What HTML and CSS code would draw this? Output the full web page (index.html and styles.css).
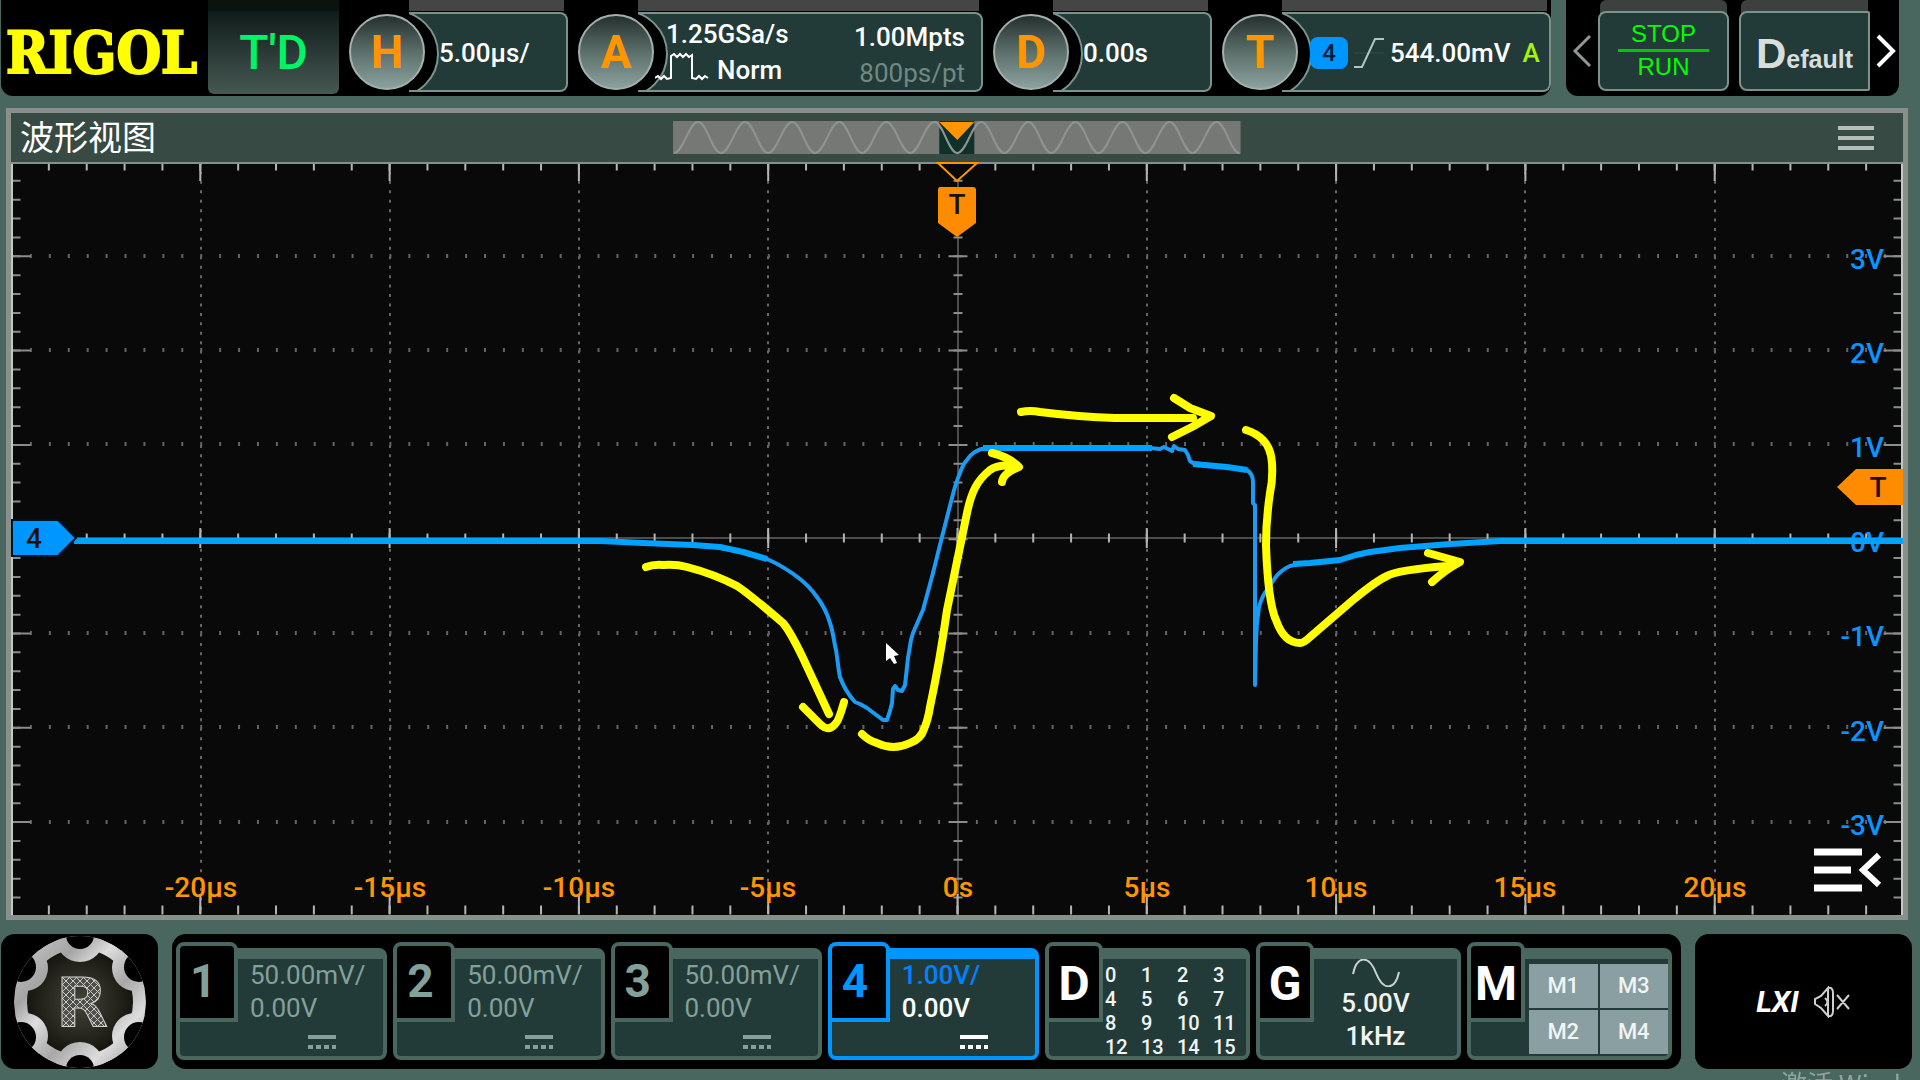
FILE: index.html
```html
<!DOCTYPE html>
<html lang="zh">
  <head>
    <meta charset="utf-8">
    <title>RIGOL</title>
    <link rel="stylesheet" href="styles.css">
  </head>
  <body>
    <header class="topbar">
      <div class="group settings">
        <div class="logo">RIGOL</div>
        <div class="status">T'D</div>
        <button class="module short">
          <span class="knob">H</span>
          <span class="box">5.00µs/</span>
        </button>
        <button class="module acquire">
          <span class="knob">A</span>
          <span class="box">
            <span class="col">
              <span class="rate">1.25GSa/s</span>
              <span class="mode">
                <svg width="54" height="30" viewBox="0 0 54 30"><path d="M0 26l3-2 3 3 3-3 3 3 4-1V4l3-2 3 3 3-3 3 3 3-3 3 3 3-2V26l4 1 3-3 3 3 3-3 3 2" fill="none" stroke="#fff" stroke-width="2"/></svg>
                Norm
              </span>
            </span>
            <span class="col right">
              <span>1.00Mpts</span>
              <span class="dim">800ps/pt</span>
            </span>
          </span>
        </button>
        <button class="module short">
          <span class="knob">D</span>
          <span class="box">0.00s</span>
        </button>
        <button class="module trigger">
          <span class="knob">T</span>
          <span class="box">
            <span class="source">4</span>
            <svg width="30" height="32" viewBox="0 0 30 32"><path d="M0 16H30" stroke="#21483f" stroke-width="2"/><path d="M0 30H8L21 2H30" fill="none" stroke="#b4c4c0" stroke-width="2"/></svg>
            <span class="level">544.00mV</span>
            <span class="sweep">A</span>
          </span>
        </button>
      </div>
      <div class="group quick">
        <button class="arrow" aria-label="previous">
          <svg width="20" height="34" viewBox="0 0 20 34"><path d="M18 2L3 17L18 32" fill="none" stroke="#8f9694" stroke-width="3"/></svg>
        </button>
        <button class="action stop"><span>STOP</span><span class="run">RUN</span></button>
        <button class="action default"><span class="cap">D</span>efault</button>
        <button class="arrow" aria-label="next">
          <svg width="20" height="34" viewBox="0 0 20 34"><path d="M2 2L17 17L2 32" fill="none" stroke="#fff" stroke-width="4"/></svg>
        </button>
      </div>
    </header>

    <main class="view">
      <div class="view-head">
        <h1>波形视图</h1>
        <svg class="minimap" viewBox="0 0 567 33">
          <rect width="567" height="33" fill="#767876"/>
          <rect x="266" width="35" height="33" fill="#10302a"/>
          <path d="M1 32c9 0 15-31 24-31s14 31 23 31s15-31 24-31s14 31 23 31s15-31 24-31s14 31 23 31s15-31 24-31s14 31 23 31s15-31 24-31s15 31 24 31s15-31 24-31s14 31 23 31s15-31 24-31s14 31 23 31s15-31 24-31s14 31 23 31s15-31 24-31s14 31 23 31s15-31 24-31s14 31 23 31s15-31 24-31s14 31 23 31" fill="none" stroke="#8f9491" stroke-width="2"/>
          <path d="M519 32c9 0 15-31 24-31s14 31 23 31" fill="none" stroke="#8f9491" stroke-width="2"/>
          <path d="M266 1H301L284 19Z" fill="#ff9500"/>
        </svg>
        <button class="menu" aria-label="menu">
          <svg width="36" height="26" viewBox="0 0 36 26"><path d="M0 3H36M0 13H36M0 23H36" stroke="#b5bdb9" stroke-width="4"/></svg>
        </button>
      </div>

      <svg class="screen" viewBox="11 162 1892 753">
        <rect x="11" y="162" width="1892" height="753" fill="#090909"/>

        <!-- dotted grid -->
        <path class="dots-h" d="M11 256H1903M11 350H1903M11 444H1903M11 633H1903M11 727H1903M11 822H1903"/>
        <path class="dots-v" d="M201 162V915M390 162V915M579 162V915M768 162V915M1147 162V915M1336 162V915M1525 162V915M1715 162V915"/>
        <path class="axis" d="M11 538H1903M958 162V915"/>

        <!-- small and large ticks -->
        <path class="ticks-x" d="M10 166H1903M10 538H1903M10 910H1903"/>
        <path class="ticks-y" d="M16 161V915M958 161V915M1898 161V915"/>
        <path class="long-x" d="M10 171H1903M10 538H1903M10 904H1903"/>
        <path class="long-y" d="M21 161V915M958 161V915M1893 161V915"/>
        <path d="M12 162V915M1902 162V915" stroke="#c4c8c6" stroke-width="2"/>
        <path d="M11 163H1903" stroke="#84908b" stroke-width="2"/>

        <g class="time-label">
          <text x="201" y="897">-20µs</text>
          <text x="390" y="897">-15µs</text>
          <text x="579" y="897">-10µs</text>
          <text x="768" y="897">-5µs</text>
          <text x="958" y="897">0s</text>
          <text x="1147" y="897">5µs</text>
          <text x="1336" y="897">10µs</text>
          <text x="1525" y="897">15µs</text>
          <text x="1715" y="897">20µs</text>
        </g>
        <g class="volt-label">
          <text x="1884" y="269">3V</text>
          <text x="1884" y="363">2V</text>
          <text x="1884" y="457">1V</text>
          <text x="1884" y="552">0V</text>
          <text x="1884" y="646">-1V</text>
          <text x="1884" y="741">-2V</text>
          <text x="1884" y="835">-3V</text>
        </g>

        <!-- channel 4 trace -->
        <g class="trace">
          <path class="slope" d="M720 548Q748 552 767 559Q785 567 800 579Q809 586 817 597Q826 609 830 623C834 635 834 643 836 650C838 662 838 668 840 677Q845 691 855 702L860 704L867 708L875 714L883 720H887L890 711L892 703L893 689L895 686L898 690L902 691L905 685L908 658L911 640L913 633L923 610L933 573L942 537L952 498Q956 482 960 473Q963 464 967 460Q973 450 986 448"/>
          <path class="slope" d="M1150 448L1160 449L1164 447L1168 449L1172 451L1174 446L1178 449L1185 450L1188 455L1190 461L1193 463L1210 465L1227 467L1247 470Q1253 474 1253 482V503L1255 505V685L1256 640L1257 623L1259 607Q1262 596 1267 590L1275 578Q1281 570 1290 566Q1300 563 1310 563L1340 560"/>
          <path class="flat" d="M74 541H600L643 543L693 545L720 547L743 552L767 559M983 448H1152M1193 464L1227 467L1247 470M1293 564L1310 563L1340 560L1356 555L1370 552L1400 548L1450 544L1500 541H1903"/>
        </g>

        <!-- hand drawn arrows -->
        <g class="marks">
          <path d="M646 567Q654 564 663 565Q676 564 687 567Q714 574 737 586Q748 593 783 623Q790 631 803 658L829 714M803 707L820 724Q829 733 836 723Q839 720 844 702"/>
          <path d="M862 734Q869 741 877 743Q893 751 910 743Q921 739 924 729Q928 720 930 707Q940 660 947 610L967 513Q970 498 975 488Q980 478 990 470Q998 464 1016 466M992 453Q1009 457 1019 467Q1003 473 1002 482"/>
          <path d="M1021 412Q1030 410 1040 412Q1080 417 1115 418H1193M1174 398L1190 408L1211 416L1192 427L1172 437"/>
          <path d="M1246 430Q1256 433 1263 440Q1271 448 1272 463Q1273 480 1270 493Q1266 520 1266 545Q1268 602 1276 620Q1284 643 1300 643Q1304 643 1310 637L1353 600Q1376 581 1387 576Q1397 570 1447 566M1428 553L1460 562Q1445 570 1432 582"/>
        </g>
        <path d="M886 643V661L890 658L894 664L897 663L894 656L899 655Z" fill="#fff"/>

        <!-- trigger and channel markers -->
        <path d="M938 163H977L957 181Z" fill="#090909" stroke="#ff9500" stroke-width="2"/>
        <path d="M940 187H973Q976 187 976 190V223L957 237L938 223V190Q938 187 940 187Z" fill="#ff8c00"/>
        <path d="M1903 469H1856L1837 487L1856 505H1903Z" fill="#ff8c00"/>
        <path d="M12 520H58L76 538L58 556H12Z" fill="#0096ff" stroke="#001428" stroke-width="2"/>
        <g class="marker-label">
          <text x="957" y="214">T</text>
          <text x="1878" y="497">T</text>
          <text x="34" y="548">4</text>
        </g>
        <path d="M1814 852H1862M1814 870H1851M1814 888H1862" stroke="#fff" stroke-width="7"/>
        <path d="M1879 855L1863 870L1879 885" fill="none" stroke="#fff" stroke-width="6"/>
      </svg>
    </main>

    <footer class="bottombar">
      <button class="group home" aria-label="home">
        <svg width="136" height="134" viewBox="-68 -67 136 134">
          <defs>
            <linearGradient id="silver" gradientUnits="userSpaceOnUse" x1="-60" y1="-60" x2="60" y2="60">
              <stop offset="0" stop-color="#c8c8c8"/>
              <stop offset="0.25" stop-color="#a4a4a4"/>
              <stop offset="0.4" stop-color="#dedede"/>
              <stop offset="0.6" stop-color="#a8a8a8"/>
              <stop offset="0.8" stop-color="#dcdcdc"/>
              <stop offset="1" stop-color="#a0a0a0"/>
            </linearGradient>
            <radialGradient id="core">
              <stop offset="0" stop-color="#45443a"/>
              <stop offset="1" stop-color="#161610"/>
            </radialGradient>
            <pattern id="mesh" width="7" height="7" patternUnits="userSpaceOnUse">
              <rect width="7" height="7" fill="#4e4e4a"/>
              <path d="M0 0L7 7M7 0L0 7" stroke="#c8c8c4" stroke-width="1"/>
            </pattern>
            <clipPath id="disc"><circle r="66"/></clipPath>
          </defs>
          <g clip-path="url(#disc)">
            <circle r="66" fill="url(#silver)"/>
            <circle r="53" fill="url(#core)"/>
            <g fill="url(#silver)">
              <circle cx="0" cy="-64" r="24"/><circle cx="55" cy="-34" r="23"/><circle cx="55" cy="34" r="23"/>
              <circle cx="0" cy="64" r="24"/><circle cx="-55" cy="34" r="23"/><circle cx="-55" cy="-34" r="23"/>
            </g>
            <g fill="#000">
              <circle cx="0" cy="-67" r="14"/><circle cx="59" cy="-35" r="15"/><circle cx="59" cy="35" r="15"/>
              <circle cx="0" cy="67" r="14"/><circle cx="-59" cy="35" r="15"/><circle cx="-59" cy="-35" r="15"/>
            </g>
          </g>
          <text class="emblem" x="2" y="25">R</text>
        </svg>
      </button>

      <div class="group channels">
        <button class="card">
          <span class="tab">1</span>
          <span class="values">50.00mV/<br>0.00V
            <svg class="dc" width="28" height="14" viewBox="0 0 28 14"><path d="M0 2H28"/><path d="M0 12H28" stroke-dasharray="5 3"/></svg>
          </span>
        </button>
        <button class="card">
          <span class="tab">2</span>
          <span class="values">50.00mV/<br>0.00V
            <svg class="dc" width="28" height="14" viewBox="0 0 28 14"><path d="M0 2H28"/><path d="M0 12H28" stroke-dasharray="5 3"/></svg>
          </span>
        </button>
        <button class="card">
          <span class="tab">3</span>
          <span class="values">50.00mV/<br>0.00V
            <svg class="dc" width="28" height="14" viewBox="0 0 28 14"><path d="M0 2H28"/><path d="M0 12H28" stroke-dasharray="5 3"/></svg>
          </span>
        </button>
        <button class="card active">
          <span class="tab">4</span>
          <span class="values"><span class="scale">1.00V/</span><br>0.00V
            <svg class="dc" width="28" height="14" viewBox="0 0 28 14"><path d="M0 2H28"/><path d="M0 12H28" stroke-dasharray="5 3"/></svg>
          </span>
        </button>
        <button class="card tool">
          <span class="tab">D</span>
          <span class="digits">
            <span>0</span><span>1</span><span>2</span><span>3</span>
            <span>4</span><span>5</span><span>6</span><span>7</span>
            <span>8</span><span>9</span><span>10</span><span>11</span>
            <span>12</span><span>13</span><span>14</span><span>15</span>
          </span>
        </button>
        <button class="card tool">
          <span class="tab">G</span>
          <span class="generator">
            <svg width="48" height="28" viewBox="0 0 48 28"><path d="M1 15C5-4 17-4 24 14S43 32 47 13" fill="none" stroke="#c8d4d0" stroke-width="2"/></svg>
            <span>5.00V</span>
            <span>1kHz</span>
          </span>
        </button>
        <button class="card tool">
          <span class="tab">M</span>
          <span class="maths"><span>M1</span><span>M3</span><span>M2</span><span>M4</span></span>
        </button>
      </div>

      <div class="group tray">
        <span class="lxi">LXI</span>
        <svg width="38" height="32" viewBox="0 0 38 32"><path d="M15 2V30L8 22L2 18V13L8 10ZM15 2Q20 1 20 7V25Q20 31 15 30M12 12Q17 16 12 20M24 9L36 23M36 9L24 23" fill="none" stroke="#d0d0d0" stroke-width="2"/></svg>
      </div>
    </footer>
    <div class="watermark">激活 Windows</div>
  </body>
</html>
```

FILE: styles.css
```css
* {
  box-sizing: border-box;
}
html {
  height: 100%;
  overflow: hidden;
}
body {
  margin: 0;
  height: 100%;
  overflow: hidden;
  background: #49675f;
  color: #fff;
  font-family: Roboto, "Noto Sans CJK SC", sans-serif;
  font-size: 26px;
}
button {
  padding: 0;
  border: 0;
  background: none;
  color: inherit;
  font: inherit;
  text-align: left;
  cursor: pointer;
}
svg {
  display: block;
  flex: none;
}
.group {
  display: flex;
  background: #000;
  border-radius: 14px;
}

/* top bar */
.topbar {
  display: flex;
  gap: 15px;
  height: 96px;
  padding: 0 21px 0 1px;
}
.topbar .group {
  border-radius: 0 0 12px 12px;
}
.settings {
  flex: 1;
  gap: 10px;
}
.logo {
  width: 197px;
  padding: 16px 0 0 5px;
  color: #ff0;
  font: bold 57px/74px "DejaVu Serif Condensed", "DejaVu Serif", serif;
  -webkit-text-stroke: 2px #ff0;
}
.status {
  width: 131px;
  margin-bottom: 2px;
  padding-top: 12px;
  border-radius: 0 0 6px 6px;
  background: linear-gradient(#0a130e 11px, #101c1a 11px, #465852);
  color: #00f566;
  font-size: 48px;
  font-weight: 500;
  line-height: 82px;
  text-align: center;
}
.module {
  display: flex;
  align-items: center;
  padding: 12px 0 4px;
  background: linear-gradient(#434644, #434644) 60px 0 / calc(100% - 64px) 11px no-repeat;
}
.short {
  width: 219px;
}
.acquire {
  width: 405px;
}
.trigger {
  flex: 1;
}
.knob {
  position: relative;
  z-index: 1;
  flex: none;
  width: 76px;
  height: 76px;
  margin-right: -16px;
  border: 2px solid #a3b0ac;
  border-radius: 50%;
  background: linear-gradient(#25302e, #5c6f6b 50%, #8aa19d);
  color: #ff9500;
  font-size: 46px;
  font-weight: 700;
  line-height: 72px;
  text-align: center;
}
.box {
  position: relative;
  display: flex;
  flex: 1;
  align-items: center;
  height: 80px;
  padding: 2px 0 0 30px;
  overflow: hidden;
  border: 2px solid #7b938c;
  border-left: 0;
  border-radius: 0 8px 8px 0;
  background: #223b38;
  font-weight: 500;
}
/* black cutout around the knob */
.box::before {
  content: "";
  position: absolute;
  top: 50%;
  left: -58px;
  width: 84px;
  height: 84px;
  margin-top: -42px;
  border: 2px solid #7b938c;
  border-radius: 50%;
  background: #000;
}
.acquire .box {
  justify-content: space-between;
  padding: 0 16px 0 17px;
}
.col {
  position: relative;
  display: flex;
  flex-direction: column;
  line-height: 36px;
}
.rate {
  padding-left: 11px;
}
.mode {
  display: flex;
  gap: 8px;
}
.right {
  padding-top: 6px;
  text-align: right;
}
.dim {
  color: #6f8983;
  font-weight: 400;
}
.trigger .box {
  gap: 6px;
  padding-left: 28px;
}
.source {
  position: relative;
  width: 38px;
  border-radius: 8px;
  background: #0096ff;
  color: #001c3c;
  font-size: 24px;
  line-height: 32px;
  text-align: center;
}
.sweep {
  padding-left: 6px;
  color: #a4f50a;
}
.quick {
  align-items: center;
  width: 333px;
  padding: 6px 6px 0;
}
.arrow {
  width: 20px;
}
.action {
  flex: none;
  width: 131px;
  height: 80px;
  margin: 0 0 0 6px;
  border: 2px solid #7b938c;
  border-radius: 8px;
  background: #223b38;
  box-shadow: 0 -13px 0 -2px #3c413f;
  font-family: "Liberation Sans", sans-serif;
}
.stop {
  display: flex;
  flex-direction: column;
  align-items: center;
  padding: 6px 18px 0;
  color: #0f0;
  font-size: 24px;
  line-height: 30px;
}
.run {
  align-self: stretch;
  border-top: 3px solid #00c800;
  text-align: center;
}
.default {
  margin: 0 6px 0 10px;
  padding-top: 6px;
  border-radius: 8px 2px 2px 8px;
  color: #d8dedc;
  font-size: 25px;
  font-weight: 700;
  text-align: center;
}
.cap {
  font-size: 42px;
}

/* waveform window */
.view {
  margin: 12px 12px 14px 6px;
  border: 5px solid #898f8b;
}
.view-head {
  display: grid;
  grid-template-columns: 1fr 30% 1fr;
  align-items: center;
  height: 49px;
  background: #374a44;
}
.view-head h1 {
  margin: 0;
  padding-left: 9px;
  font-size: 34px;
  font-weight: 400;
  line-height: 48px;
}
.minimap {
  width: 100%;
}
.menu {
  justify-self: end;
  margin-right: 29px;
}
.screen {
  width: 100%;
  height: auto;
}
.dots-h,
.dots-v {
  fill: none;
  stroke: #646464;
}
.dots-h {
  stroke-width: 4px;
  stroke-dasharray: 2 16.92;
}
.dots-v {
  stroke-width: 2px;
  stroke-dasharray: 3 6.43;
}
.axis {
  stroke: #4c4c4c;
  stroke-width: 2px;
}
.ticks-x,
.ticks-y,
.long-x,
.long-y {
  fill: none;
  stroke: #b4b4b4;
}
.ticks-x {
  stroke-width: 9px;
  stroke-dasharray: 2 35.86;
}
.ticks-y {
  stroke-width: 9px;
  stroke: #8c8c8c;
  stroke-dasharray: 2 16.86;
}
.long-x {
  stroke-width: 20px;
  stroke-dasharray: 2 187.3;
}
.long-y {
  stroke-width: 19px;
  stroke: #8c8c8c;
  stroke-dasharray: 2 92.3;
}
.time-label,
.volt-label,
.marker-label {
  font-size: 28px;
  font-weight: 500;
}
.time-label {
  fill: #ff9500;
  text-anchor: middle;
}
.volt-label {
  fill: #0a94ff;
  text-anchor: end;
}
.marker-label {
  fill: #1c1008;
  text-anchor: middle;
}
.trace {
  fill: none;
  stroke: #00a2ff;
  stroke-linejoin: round;
}
.flat {
  stroke-width: 6px;
}
.slope {
  stroke: #1a9cf5;
  stroke-width: 4px;
}
.marks {
  fill: none;
  stroke: #ff0;
  stroke-width: 8px;
  stroke-linecap: round;
  stroke-linejoin: round;
}

/* bottom bar */
.bottombar {
  display: flex;
  gap: 14px;
  height: 135px;
  padding: 0 8px 0 1px;
}
.home {
  align-items: center;
  justify-content: center;
  width: 157px;
}
.emblem {
  fill: url(#mesh);
  stroke: #d0d0cc;
  stroke-width: 1px;
  font: bold 68px "DejaVu Sans", sans-serif;
  text-anchor: middle;
}
.channels {
  flex: 1;
  gap: 6px;
  padding: 14px 9px 9px 4px;
}
.card {
  display: flex;
  flex: 1;
  align-items: flex-start;
  border: 4px solid #49675f;
  border-top-width: 11px;
  border-radius: 8px;
  background: #223b38;
  color: #84a09b;
}
.tool {
  flex: none;
  width: 205px;
  color: #f0f4f2;
}
.tab {
  flex: none;
  width: 62px;
  height: 80px;
  margin: -17px 0 0 -4px;
  padding-left: 10px;
  border: 4px solid #49675f;
  border-radius: 8px 8px 0 0;
  background: #000;
  font-size: 46px;
  font-weight: 700;
  line-height: 70px;
}
.tool .tab {
  width: 58px;
  padding: 0;
  color: #fff;
  font-size: 48px;
  line-height: 76px;
  text-align: center;
}
.values {
  padding-left: 12px;
  line-height: 33px;
}
.dc {
  margin: 10px 0 0 58px;
  stroke: currentColor;
  stroke-width: 4px;
}
.active {
  border-color: #0096ff;
  color: #fff;
}
.active .values {
  font-weight: 500;
}
.active .tab {
  border-color: #0096ff;
  color: #0096ff;
}
.scale {
  color: #0082ff;
}
.digits {
  display: grid;
  grid-template-columns: repeat(4, 36px);
  padding: 4px 0 0 2px;
  font-size: 20px;
  font-weight: 500;
  line-height: 24px;
}
.generator {
  display: flex;
  flex: 1;
  flex-direction: column;
  align-items: center;
  padding-right: 20px;
  font-weight: 500;
  line-height: 33px;
}
.maths {
  display: grid;
  flex: 1;
  grid-template-columns: 1fr 1fr;
  gap: 2px;
  margin: 5px 0 0 4px;
  font-size: 22px;
  font-weight: 500;
  line-height: 44px;
  text-align: center;
}
.maths span {
  background: #8a9fa2;
}
.tray {
  gap: 14px;
  align-items: center;
  justify-content: center;
  width: 217px;
}
.lxi {
  font-size: 30px;
  font-style: italic;
  font-weight: 700;
}
.watermark {
  position: fixed;
  top: 1066px;
  left: 1781px;
  color: #8ea39b;
  font-family: "Noto Sans CJK SC", sans-serif;
  font-size: 26px;
  line-height: 34px;
  white-space: nowrap;
}
```
